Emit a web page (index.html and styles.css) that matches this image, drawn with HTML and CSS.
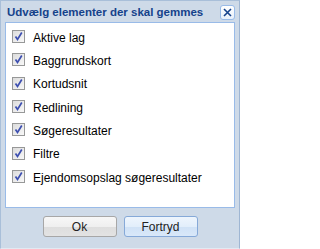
FILE: index.html
```html
<!DOCTYPE html>
<html lang="da">
<head>
<meta charset="utf-8">
<title>Udvælg elementer der skal gemmes</title>
<link rel="stylesheet" href="styles.css">
</head>
<body>
<div class="window">
  <div class="header">
    <span class="title">Udvælg elementer der skal gemmes</span>
    <span class="close"><svg width="13" height="13" viewBox="0 0 13 13"><path d="M3 3 L10 10 M10 3 L3 10" stroke="#15428b" stroke-width="1.6" fill="none"/></svg></span>
  </div>
  <div class="panel">
    <div class="row"><span class="cb"><svg width="11" height="11" viewBox="0 0 11 11"><path d="M2.5 5.5 L4.5 8.5 L8.8 1.5" stroke="#3d4fb0" stroke-width="1.7" fill="none"/></svg></span><span class="label">Aktive lag</span></div>
    <div class="row"><span class="cb"><svg width="11" height="11" viewBox="0 0 11 11"><path d="M2.5 5.5 L4.5 8.5 L8.8 1.5" stroke="#3d4fb0" stroke-width="1.7" fill="none"/></svg></span><span class="label">Baggrundskort</span></div>
    <div class="row"><span class="cb"><svg width="11" height="11" viewBox="0 0 11 11"><path d="M2.5 5.5 L4.5 8.5 L8.8 1.5" stroke="#3d4fb0" stroke-width="1.7" fill="none"/></svg></span><span class="label">Kortudsnit</span></div>
    <div class="row"><span class="cb"><svg width="11" height="11" viewBox="0 0 11 11"><path d="M2.5 5.5 L4.5 8.5 L8.8 1.5" stroke="#3d4fb0" stroke-width="1.7" fill="none"/></svg></span><span class="label">Redlining</span></div>
    <div class="row"><span class="cb"><svg width="11" height="11" viewBox="0 0 11 11"><path d="M2.5 5.5 L4.5 8.5 L8.8 1.5" stroke="#3d4fb0" stroke-width="1.7" fill="none"/></svg></span><span class="label">Søgeresultater</span></div>
    <div class="row"><span class="cb"><svg width="11" height="11" viewBox="0 0 11 11"><path d="M2.5 5.5 L4.5 8.5 L8.8 1.5" stroke="#3d4fb0" stroke-width="1.7" fill="none"/></svg></span><span class="label">Filtre</span></div>
    <div class="row"><span class="cb"><svg width="11" height="11" viewBox="0 0 11 11"><path d="M2.5 5.5 L4.5 8.5 L8.8 1.5" stroke="#3d4fb0" stroke-width="1.7" fill="none"/></svg></span><span class="label">Ejendomsopslag søgeresultater</span></div>
  </div>
  <div class="footer">
    <button class="btn btn-ok">Ok</button>
    <button class="btn btn-cancel">Fortryd</button>
  </div>
</div>
</body>
</html>
```
FILE: styles.css
```css
html, body {
  margin: 0;
  padding: 0;
  background: #ffffff;
}
body {
  font-family: "Liberation Sans", Arial, sans-serif;
}
.window {
  width: 240px;
  height: 249px;
  box-sizing: border-box;
  background: #cedae8;
  border: 1px solid #a9bfd9;
  border-right-color: #9fb6d3;
  border-bottom-color: #e2e9f2;
  display: flex;
  flex-direction: column;
}
.header {
  height: 21px;
  display: flex;
  align-items: center;
  justify-content: space-between;
  padding: 0 4px 0 6px;
}
.title {
  font-weight: bold;
  font-size: 11.5px;
  color: #15428b;
  white-space: nowrap;
}
.close {
  width: 13px;
  height: 13px;
  border: 1px solid #99bbe8;
  border-radius: 3px;
  background: linear-gradient(#ffffff, #e8f0fa);
  display: flex;
  margin-top: 2px;
}
.panel {
  margin: 0 4px 0 4px;
  height: 186px;
  box-sizing: border-box;
  background: #ffffff;
  border: 1px solid #99bbe8;
  padding-top: 3px;
  display: flex;
  flex-direction: column;
}
.row {
  height: 23.33px;
  display: flex;
  align-items: center;
  padding-left: 6px;
  flex-shrink: 0;
}
.cb {
  width: 11px;
  height: 11px;
  border: 1px solid #979898;
  background: linear-gradient(135deg, #dcdcdc, #f8f8f8);
  display: flex;
  margin-right: 8px;
  position: relative;
  top: -1px;
}
.label {
  font-size: 12px;
  color: #000000;
  white-space: nowrap;
}
.footer {
  display: flex;
  justify-content: center;
  gap: 7px;
  padding-top: 8px;
}
.btn {
  width: 74px;
  height: 21px;
  box-sizing: border-box;
  border-radius: 3px;
  font-family: "Liberation Sans", Arial, sans-serif;
  font-size: 12px;
  color: #222222;
  padding: 0;
  margin: 0;
}
.btn-ok {
  border: 1px solid #a7a7a7;
  background: linear-gradient(#f7f7f7 0%, #efefef 50%, #dddddd 50%, #e3e3e3 100%);
}
.btn-cancel {
  border: 1px solid #86a9d8;
  background: linear-gradient(#eef5fd 0%, #e2eefb 50%, #cfe1f6 50%, #d9e8f9 100%);
}
```
